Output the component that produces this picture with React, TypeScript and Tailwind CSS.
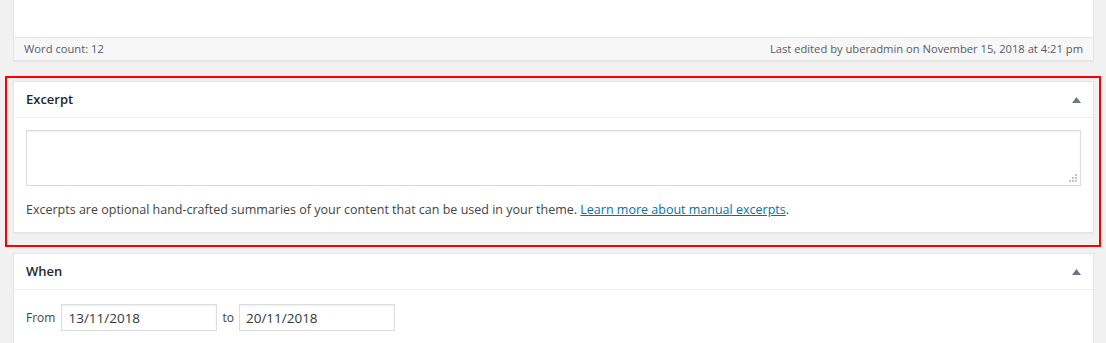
import React from "react";

const font = { fontFamily: '"Open Sans", "Noto Sans", Arial, sans-serif' };

function ToggleArrow() {
  return (
    <svg width="9" height="6" viewBox="0 0 9 6" className="block">
      <polygon points="4.5,0 9,6 0,6" fill="#72777c" />
    </svg>
  );
}

function ResizeGrip() {
  return (
    <svg width="8" height="8" viewBox="0 0 8 8" className="absolute right-[4px] bottom-[4px]">
      <rect x="6" y="0" width="2" height="2" fill="#c4c4c4" />
      <rect x="3" y="3" width="2" height="2" fill="#c4c4c4" />
      <rect x="6" y="3" width="2" height="2" fill="#c4c4c4" />
      <rect x="0" y="6" width="2" height="2" fill="#c4c4c4" />
      <rect x="3" y="6" width="2" height="2" fill="#c4c4c4" />
      <rect x="6" y="6" width="2" height="2" fill="#c4c4c4" />
    </svg>
  );
}

function PostboxHeader({ title }: { title: string }) {
  return (
    <div className="h-[36px] border-b border-[#eee] flex items-center justify-between pl-[12px] pr-[12px]">
      <h2 className="text-[13px] font-semibold text-[#23282d] leading-none">{title}</h2>
      <ToggleArrow />
    </div>
  );
}

export default function App() {
  return (
    <div
      className="h-[343px] overflow-hidden bg-[#f1f1f1] pl-[13px] pr-[12px] text-[12.5px] text-[#444]"
      style={font}
    >
      {/* editor bottom + status bar */}
      <div className="border-x border-b border-[#e5e5e5] bg-white shadow-[0_1px_1px_rgba(0,0,0,0.04)]">
        <div className="h-[37px]" />
        <div className="h-[23px] border-t border-[#e5e5e5] bg-[#f7f7f7] flex items-center justify-between pl-[10px] pr-[10px] text-[11.2px] text-[#555d66]">
          <span>Word count: 12</span>
          <span>Last edited by uberadmin on November 15, 2018 at 4:21 pm</span>
        </div>
      </div>

      {/* highlighted excerpt box */}
      <div className="mt-[15px] -ml-[8px] -mr-[7px] border-2 border-[#f00] pl-[6px] pr-[5px] pt-[3px] pb-[12px]">
        <div className="border border-[#e5e5e5] bg-white shadow-[0_1px_1px_rgba(0,0,0,0.04)]">
          <PostboxHeader title="Excerpt" />
          <div className="px-[12px] pt-[12px] pb-[13px]">
            <div className="relative">
              <textarea
                className="block w-full h-[56px] resize-none border border-[#ddd] bg-white shadow-[inset_0_1px_2px_rgba(0,0,0,0.07)] outline-none"
                aria-label="Excerpt"
              />
              <ResizeGrip />
            </div>
            <p className="mt-[14px] leading-[19px]">
              Excerpts are optional hand-crafted summaries of your content that can be used in your theme.{" "}
              <a href="#" className="text-[#0073aa] underline">
                Learn more about manual excerpts
              </a>
              .
            </p>
          </div>
        </div>
      </div>

      {/* when box */}
      <div className="mt-[6px] border border-[#e5e5e5] bg-white shadow-[0_1px_1px_rgba(0,0,0,0.04)]">
        <PostboxHeader title="When" />
        <div className="px-[12px] pt-[14px] pb-[14px] flex items-center text-[12px]">
          <span>From</span>
          <input
            defaultValue="13/11/2018"
            className="ml-[6px] w-[156px] h-[27px] border border-[#ddd] px-[6px] text-[13.5px] text-[#32373c] shadow-[inset_0_1px_2px_rgba(0,0,0,0.07)] outline-none"
          />
          <span className="ml-[5px]">to</span>
          <input
            defaultValue="20/11/2018"
            className="ml-[5px] w-[156px] h-[27px] border border-[#ddd] px-[6px] text-[13.5px] text-[#32373c] shadow-[inset_0_1px_2px_rgba(0,0,0,0.07)] outline-none"
          />
        </div>
      </div>
    </div>
  );
}
